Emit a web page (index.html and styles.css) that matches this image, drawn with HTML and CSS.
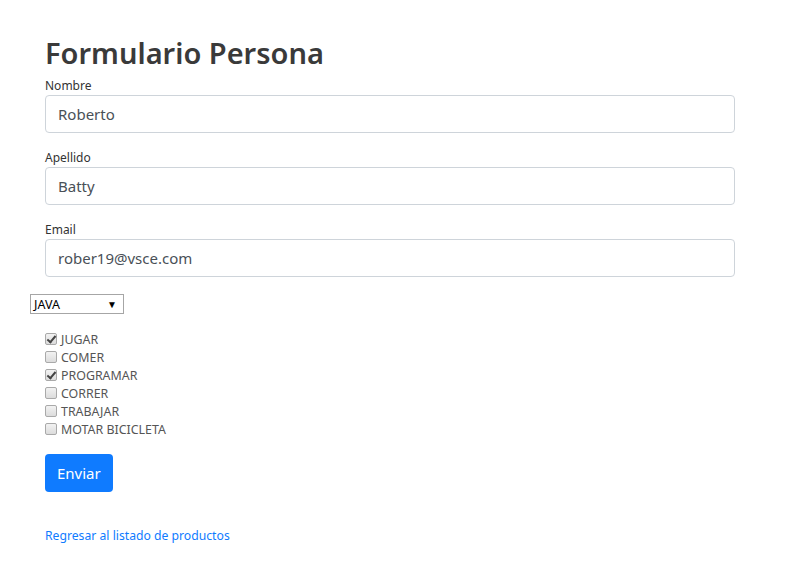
FILE: index.html
```html
<!DOCTYPE html>
<html lang="es">
<head>
<meta charset="utf-8">
<title>Formulario Persona</title>
<link rel="stylesheet" href="styles.css">
</head>
<body>
<div class="page">
  <h2 class="title">Formulario Persona</h2>
  <form class="form">
    <div class="group">
      <label class="label">Nombre</label>
      <input class="input" type="text" value="Roberto">
    </div>
    <div class="group">
      <label class="label">Apellido</label>
      <input class="input" type="text" value="Batty">
    </div>
    <div class="group">
      <label class="label">Email</label>
      <input class="input" type="text" value="rober19@vsce.com">
    </div>
    <div class="select-row">
      <div class="select"><span>JAVA</span><span class="arrow">▼</span></div>
    </div>
    <ul class="checks">
      <li class="check"><span class="box checked"></span>JUGAR</li>
      <li class="check"><span class="box"></span>COMER</li>
      <li class="check"><span class="box checked"></span>PROGRAMAR</li>
      <li class="check"><span class="box"></span>CORRER</li>
      <li class="check"><span class="box"></span>TRABAJAR</li>
      <li class="check"><span class="box"></span>MOTAR BICICLETA</li>
    </ul>
    <button class="btn" type="button">Enviar</button>
  </form>
  <a class="link" href="#">Regresar al listado de productos</a>
</div>
</body>
</html>
```

FILE: styles.css
```css
html, body {
  margin: 0;
  padding: 0;
  background: #fff;
}
body {
  font-family: "Noto Sans", "Open Sans", sans-serif;
  color: #212529;
}
.page {
  width: 690px;
  padding: 34px 0 0 45px;
}
.title {
  margin: 0 0 5px;
  font-size: 29px;
  font-weight: 600;
  line-height: 38px;
  color: #3a3a3a;
}
.form {
  margin: 0;
}
.group {
  margin-bottom: 16px;
}
.label {
  display: block;
  font-size: 12px;
  line-height: 18px;
  color: #333;
  margin-bottom: 0;
}
.input {
  display: block;
  box-sizing: border-box;
  width: 690px;
  height: 38px;
  padding: 6px 12px;
  font-family: inherit;
  font-size: 15px;
  color: #495057;
  border: 1px solid #ced4da;
  border-radius: 4px;
  background: #fff;
}
.select-row {
  margin-left: -15px;
  margin-top: 17px;
}
.select {
  box-sizing: border-box;
  width: 94px;
  height: 20px;
  border: 1px solid #a6a6a6;
  display: flex;
  align-items: center;
  justify-content: space-between;
  padding: 0 6px 0 3px;
  font-family: "Noto Sans", sans-serif;
  font-size: 12.5px;
  color: #000;
}
.arrow {
  font-size: 10px;
}
.checks {
  list-style: none;
  margin: 16px 0 0;
  padding: 0;
}
.check {
  display: flex;
  align-items: center;
  height: 18px;
  font-size: 12.4px;
  color: #555;
}
.box {
  box-sizing: border-box;
  width: 12px;
  height: 12px;
  margin-right: 4px;
  border: 1px solid #a9a9a9;
  border-radius: 2px;
  background: linear-gradient(#f2f2f2, #dcdcdc);
  position: relative;
}
.box.checked::after {
  content: "";
  position: absolute;
  left: 3px;
  top: 0px;
  width: 3px;
  height: 7px;
  border: solid #444;
  border-width: 0 2px 2px 0;
  transform: rotate(40deg);
}
.btn {
  margin-top: 16px;
  height: 38px;
  padding: 0 12px;
  font-family: inherit;
  font-size: 15px;
  color: #fff;
  background: #0f7bff;
  border: 0;
  border-radius: 4px;
}
.link {
  display: inline-block;
  margin-top: 35px;
  font-size: 12.2px;
  color: #0f7bff;
  text-decoration: none;
}
```
